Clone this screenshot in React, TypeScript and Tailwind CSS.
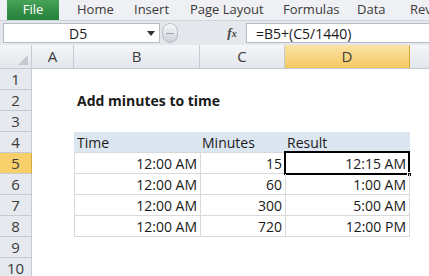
import React from "react";

const font = { fontFamily: '"Open Sans", "Liberation Sans", sans-serif' };

function ColHead({ w, label, sel }: { w: string; label: string; sel?: boolean }) {
  return (
    <div
      className={`${w} h-full flex items-center justify-center border-r border-[#c6cbd3] text-[15px] text-[#3b3b3b] ${
        sel ? "bg-gradient-to-b from-[#fbe4a6] to-[#f5c85e] border-r-[#d9a93b]" : "bg-gradient-to-b from-[#f4f6f9] to-[#e3e6eb]"
      }`}
    >
      {label}
    </div>
  );
}

function RowHead({ n, sel }: { n: number; sel?: boolean }) {
  return (
    <div
      className={`w-[32px] shrink-0 h-full flex items-center justify-center border-r border-b border-[#c6cbd3] text-[15px] text-[#3b3b3b] ${
        sel ? "bg-[#f7cf6b] border-r-[#d9a93b]" : "bg-[#e6e9ee]"
      }`}
    >
      {n}
    </div>
  );
}

function Row({ n, sel, children }: { n: number; sel?: boolean; children?: React.ReactNode }) {
  return (
    <div className="flex h-[21px]">
      <RowHead n={n} sel={sel} />
      <div className="flex flex-1 h-full">{children}</div>
    </div>
  );
}

function DataRow({ n, b, c, d, sel }: { n: number; b: string; c: string; d: string; sel?: boolean }) {
  return (
    <Row n={n} sel={sel}>
      <div className="w-[42px] shrink-0" />
      <div className="w-[126px] shrink-0 h-full flex items-center justify-end pr-[3px] border-l border-b border-[#d9d9d9]">{b}</div>
      <div className="w-[85px] shrink-0 h-full flex items-center justify-end pr-[3px] border-l border-b border-[#d9d9d9]">{c}</div>
      <div className="relative w-[125px] shrink-0 h-full flex items-center justify-end pr-[3px] border-l border-r border-b border-[#d9d9d9]">
        {sel && (
          <>
            <div className="absolute left-[-2px] top-[-2px] right-[-1px] bottom-[-2px] border-[2px] border-black" />
            <div className="absolute right-[-3px] bottom-[-4px] w-[5px] h-[5px] bg-black border border-white" />
          </>
        )}
        <span className="relative">{d}</span>
      </div>
    </Row>
  );
}

export default function App() {
  return (
    <div className="w-[429px] h-[276px] overflow-hidden bg-white text-[14px] text-[#1a1a1a]" style={font}>
      {/* Ribbon tabs */}
      <div className="h-[20px] flex items-stretch bg-[#eef0f3] text-[13px] text-[#3a3a3a] whitespace-nowrap overflow-hidden">
        <div className="ml-[7px] w-[52px] shrink-0 bg-gradient-to-b from-[#46a357] to-[#25803a] text-white flex items-center justify-center">File</div>
        <div className="ml-[18px] w-[57px] shrink-0 flex items-center">Home</div>
        <div className="w-[56px] shrink-0 flex items-center">Insert</div>
        <div className="w-[93px] shrink-0 flex items-center">Page Layout</div>
        <div className="w-[74px] shrink-0 flex items-center">Formulas</div>
        <div className="w-[53px] shrink-0 flex items-center">Data</div>
        <div className="shrink-0 flex items-center">Review</div>
      </div>
      {/* Formula bar */}
      <div className="h-[25px] flex items-center bg-[#e4e7eb] border-t border-[#cfd4da]">
        <div className="ml-[3px] w-[157px] h-[20px] bg-white border border-[#b5bcc6] flex items-center relative">
          <span className="absolute left-[65px] text-[14px]">D5</span>
          <svg className="absolute right-[4px] top-[7px]" width="8" height="5" viewBox="0 0 8 5">
            <path d="M0 0 L8 0 L4 5 Z" fill="#333" />
          </svg>
        </div>
        <div className="ml-[2px] w-[16px] h-[20px] rounded-full bg-gradient-to-b from-[#f7f8fa] to-[#cdd2d9] border border-[#b9bec6] flex items-center justify-center">
          <div className="w-[8px] h-[1px] bg-[#9aa0a8]" />
        </div>
        <div className="flex-1" />
        <div className="w-[20px] flex items-center justify-center italic font-bold text-[13px] text-[#444]" style={{ fontFamily: '"Liberation Serif", serif' }}>
          f<span className="text-[10px]">x</span>
        </div>
        <div className="ml-[4px] w-[183px] h-[20px] bg-white border-y border-l border-[#b5bcc6] flex items-center pl-[9px] text-[14px]">
          =B5+(C5/1440)
        </div>
      </div>
      {/* Column headers */}
      <div className="h-[24px] flex border-b border-[#c6cbd3]">
        <div className="w-[32px] shrink-0 h-full bg-gradient-to-b from-[#f4f6f9] to-[#e3e6eb] border-r border-[#c6cbd3] relative">
          <svg className="absolute right-[3px] bottom-[3px]" width="10" height="10" viewBox="0 0 10 10">
            <path d="M10 0 L10 10 L0 10 Z" fill="#c4c9d0" />
          </svg>
        </div>
        <ColHead w="w-[42px] shrink-0" label="A" />
        <ColHead w="w-[126px] shrink-0" label="B" />
        <ColHead w="w-[85px] shrink-0" label="C" />
        <ColHead w="w-[125px] shrink-0" label="D" sel />
        <div className="flex-1 h-full bg-gradient-to-b from-[#f4f6f9] to-[#e3e6eb]" />
      </div>
      {/* Rows */}
      <Row n={1} />
      <Row n={2}>
        <div className="w-[42px] shrink-0" />
        <div className="pl-[3px] flex items-center font-bold whitespace-nowrap">Add minutes to time</div>
      </Row>
      <Row n={3} />
      <Row n={4}>
        <div className="w-[42px] shrink-0" />
        <div className="w-[126px] shrink-0 h-full flex items-center pl-[3px] bg-[#dce6f1] border-b border-[#d9d9d9]">Time</div>
        <div className="w-[85px] shrink-0 h-full flex items-center pl-[2px] bg-[#dce6f1] border-b border-[#d9d9d9]">Minutes</div>
        <div className="w-[125px] shrink-0 h-full flex items-center pl-[2px] bg-[#dce6f1] border-b border-[#d9d9d9]">Result</div>
      </Row>
      <DataRow n={5} b="12:00 AM" c="15" d="12:15 AM" sel />
      <DataRow n={6} b="12:00 AM" c="60" d="1:00 AM" />
      <DataRow n={7} b="12:00 AM" c="300" d="5:00 AM" />
      <DataRow n={8} b="12:00 AM" c="720" d="12:00 PM" />
      <Row n={9} />
      <Row n={10} />
    </div>
  );
}
